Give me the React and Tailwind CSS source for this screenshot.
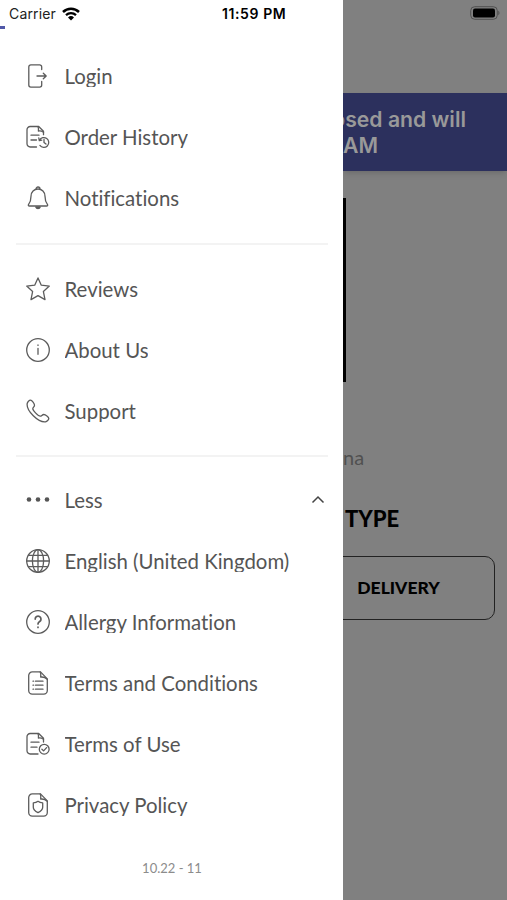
import React, { useState } from "react";

const Icon = ({ children }) => (
  <svg
    className="w-6 h-6 shrink-0 mt-[1px]"
    viewBox="0 0 24 24"
    fill="none"
    stroke="#5c5c5c"
    strokeWidth="1.3"
    strokeLinecap="round"
    strokeLinejoin="round"
  >
    {children}
  </svg>
);

const LoginIcon = () => (
  <Icon>
    <path d="M15.7 5.5V2.9A2 2 0 0 0 13.7.9H4.8a2 2 0 0 0-2 2v18.2a2 2 0 0 0 2 2h8.900a2 2 0 0 0 2-2v-3.600" />
    <path d="M11 12h8.800M17.300 9.200l2.900 2.800-2.900 2.800" />
  </Icon>
);

const HistoryIcon = () => (
  <Icon>
    <path d="M10.500 22H4.200A3.200 3.200 0 0 1 1 18.800V4.700a3.200 3.200 0 0 1 3.200-3.200h8.500l4.800 4.800v3.400" />
    <path d="M12 1.600c.8 1.600.5 3.300.4 4.500 1.600-.4 3.400.1 5.100 1.200" />
    <path d="M5 10.200h8M5 15h5.500" />
    <path d="M13.500 15.200a4.900 4.900 0 1 1 .4 5.200M12.800 13l.5 2.600 2.500-.5M18 14.500v3l2 1.600" />
  </Icon>
);

const BellIcon = () => (
  <Icon>
    <path d="M10 3a2 2 0 0 1 4 0M12 3c3.900 0 7 2.900 7 7.200 0 4.300.7 6 2.400 8.100.7.900.2 1.700-.8 1.700H3.400c-1 0-1.500-.8-.8-1.700C4.300 16.200 5 14.500 5 10.200 5 5.900 8.100 3 12 3Z" />
    <path d="M9.800 21a2.300 2.300 0 0 0 4.400 0z" fill="#5c5c5c" />
  </Icon>
);

const StarIcon = () => (
  <Icon>
    <path d="m12 .9 3.300 7.300 8 .9-5.900 5.500 1.600 8-7-4-7 4 1.600-8L.7 9.100l8-.9Z" />
  </Icon>
);

const InfoIcon = () => (
  <Icon>
    <circle cx="12" cy="12" r="11.300" />
    <path d="M12 10.300v6M12 7v.4" />
  </Icon>
);

const PhoneIcon = () => (
  <Icon>
    <path d="M1.200 4.500c.3-1.500 2-3.300 3.300-3.300 1.500 0 4 3.400 4 5 0 1.700-1.700 2.200-1.700 3.500 0 1.800 5.400 7.500 7.500 7.500 1.300 0 1.900-1.700 3.500-1.700 1.700 0 5 2.500 5 4 0 1.300-1.900 3-3.300 3.300C12.500 23.700.1 11.700 1.200 4.500Z" />
  </Icon>
);

const DotsIcon = () => (
  <Icon>
    <g fill="#555555" stroke="none">
      <circle cx="3" cy="11.500" r="2.300" />
      <circle cx="12" cy="11.500" r="2.300" />
      <circle cx="21" cy="11.500" r="2.300" />
    </g>
  </Icon>
);

const GlobeIcon = () => (
  <Icon>
    <circle cx="12" cy="12" r="11.300" />
    <ellipse cx="12" cy="12" rx="5.600" ry="11.300" />
    <path d="M12 .7v22.600M.7 12h22.600M2.500 6.300h19M2.500 17.700h19" />
  </Icon>
);

const QuestionIcon = () => (
  <Icon>
    <circle cx="12" cy="12" r="11.300" />
    <path strokeWidth="1.700" d="M9.200 9.100a2.900 2.900 0 1 1 4.500 2.400c-1.200.8-1.700 1.300-1.700 2.400M12 17.200v.2" />
  </Icon>
);

const Page = () => (
  <>
    <path d="M14.500.9H6.300a3.600 3.600 0 0 0-3.600 3.600v15a3.600 3.600 0 0 0 3.600 3.600h11.400a3.600 3.600 0 0 0 3.600-3.600V7.900Z" />
    <path d="M14.200 1c1 1.800.8 3.500.5 5.100 2.300-.3 4.600.3 6.500 2.100" />
  </>
);

const TermsIcon = () => (
  <Icon>
    <Page />
    <path d="M7 10.200h.6M7 14.200h.6M7 18.200h.6M9.500 10.200h7.500M9.500 14.200h7.500M9.500 18.200h7.500" />
  </Icon>
);

const UseIcon = () => (
  <Icon>
    <path d="M12 22H4.200A3.200 3.200 0 0 1 1 18.800V4.700a3.200 3.200 0 0 1 3.200-3.200h8.500l4.800 4.800v3.700" />
    <path d="M12 1.600c.8 1.600.5 3.300.4 4.500 1.600-.4 3.400.1 5.100 1.200" />
    <path d="M5 10.200h8M5 15.200h6" />
    <circle cx="18.200" cy="17.200" r="4.900" />
    <path d="m15.900 17.300 1.700 1.600 3-3.300" />
  </Icon>
);

const PrivacyIcon = () => (
  <Icon>
    <Page />
    <path d="M12 8.300c1.400 1.200 2.800 1.600 4.700 1.600v4.300c0 2.400-2 4.100-4.700 5.400-2.700-1.300-4.700-3-4.700-5.400V9.900c1.900 0 3.300-.4 4.700-1.600Z" />
  </Icon>
);

const account = [
  { label: "Login", icon: <LoginIcon /> },
  { label: "Order History", icon: <HistoryIcon /> },
  { label: "Notifications", icon: <BellIcon /> },
];

const about = [
  { label: "Reviews", icon: <StarIcon /> },
  { label: "About Us", icon: <InfoIcon /> },
  { label: "Support", icon: <PhoneIcon /> },
];

const more = [
  { label: "English (United Kingdom)", icon: <GlobeIcon /> },
  { label: "Allergy Information", icon: <QuestionIcon /> },
  { label: "Terms and Conditions", icon: <TermsIcon /> },
  { label: "Terms of Use", icon: <UseIcon /> },
  { label: "Privacy Policy", icon: <PrivacyIcon /> },
];

function MenuItem({ item, children, onClick }) {
  return (
    <button onClick={onClick} className="flex items-center w-full h-[61px] pl-[25.5px] pr-[18px] text-left">
      {item.icon}
      <span className="ml-[15px] mt-[2px] h-[22px] overflow-hidden whitespace-nowrap text-[20.4px] leading-[23px] text-[#555555] [font-variant-ligatures:none]">
        {item.label}
      </span>
      {children}
    </button>
  );
}

function App() {
  const [open, setOpen] = useState(true);

  return (
    <div className="flex w-[507px] h-[900px] overflow-hidden bg-[#808080] font-['Lato',sans-serif]">
      <nav className="w-[343px] h-full shrink-0 bg-white">
        <div className="flex items-center h-[26px] pl-[9px] pt-[1px] text-black font-['Inter',sans-serif]">
          <span className="w-[47px] text-[14px] tracking-[0.15px] leading-[26px] text-[#222222]">Carrier</span>
          <svg className="w-[18px] h-[14px] ml-[6px]" viewBox="0 0 18 14" fill="none" stroke="black">
            <path d="M1 5a11.500 11.500 0 0 1 16 0" strokeWidth="2.500" />
            <path d="M4 8.200a7.300 7.300 0 0 1 10 0" strokeWidth="2.300" />
            <path d="M9 13.500 6 10.500a4.300 4.300 0 0 1 6 0Z" fill="black" stroke="none" />
          </svg>
          <span className="ml-[142px] text-[14px] tracking-[0.6px] font-semibold whitespace-nowrap">11:59 PM</span>
        </div>
        <div className="w-[5px] h-[3px] bg-[#5058a8]" />

        <div className="mt-[15.5px]">
          {account.map((item) => (
            <MenuItem key={item.label} item={item} />
          ))}
        </div>
        <div className="ml-4 w-[312px] h-[2px] mt-[15.5px] mb-[12.5px] bg-[#f3f3f3]" />
        <div>
          {about.map((item) => (
            <MenuItem key={item.label} item={item} />
          ))}
        </div>
        <div className="ml-4 w-[312px] h-[2px] mt-[14px] mb-[12px] bg-[#f3f3f3]" />
        <MenuItem item={{ label: open ? "Less" : "More", icon: <DotsIcon /> }} onClick={() => setOpen(!open)}>
          <svg className="w-[14px] h-[14px] ml-auto mt-[1px]" viewBox="0 0 14 14" fill="none" stroke="#444444" strokeWidth="1.500">
            <path d={open ? "m1.500 9.500 5.500-5.500 5.500 5.500" : "m1.500 4 5.500 5.500L12.500 4"} />
          </svg>
        </MenuItem>
        {open && more.map((item) => <MenuItem key={item.label} item={item} />)}
        <p className="mt-[24px] pl-[1px] text-center text-[13px] leading-[18px] text-[#8c8c8c]">10.22 - 11</p>
      </nav>

      {/* dimmed page behind the drawer */}
      <main className="flex-1 min-w-0 overflow-hidden">
        <div className="flex items-center justify-end h-[26px] pr-[7px]">
          <svg className="w-[30px] h-[14px]" viewBox="0 0 30 14">
            <rect x=".7" y=".7" width="26.600" height="12.600" rx="4" fill="none" stroke="#505050" />
            <rect x="3" y="2.500" width="22" height="9" rx="2" fill="black" />
            <path d="M28.300 4.800c1.500.5 1.500 3.900 0 4.400Z" fill="#505050" />
          </svg>
        </div>
        <div className="mt-[67px] h-[78px] pt-[13px] bg-[#2c305d] shadow-md text-[#999999] text-[21.2px] leading-[26px] font-semibold font-['Inter',sans-serif]">
          <p className="flex justify-end pr-[41px] whitespace-nowrap">osed and will</p>
          <p>AM</p>
        </div>
        <div className="mt-[27px] w-[3px] h-[184px] bg-black" />
        <p className="mt-[62px] text-[20px] leading-[26px] text-[#505050]">na</p>
        <h2 className="mt-[35px] pl-[2px] text-[22px] leading-[28px] font-black text-black">TYPE</h2>
        <button className="flex items-center justify-center mt-[23px] -ml-[10px] w-[162px] h-[64px] pl-[1px] pr-[32px] border-[1.500px] border-[#222222] rounded-[10px]">
          <span className="text-[17.500px] font-black text-black">DELIVERY</span>
        </button>
      </main>
    </div>
  );
}

export default App;
